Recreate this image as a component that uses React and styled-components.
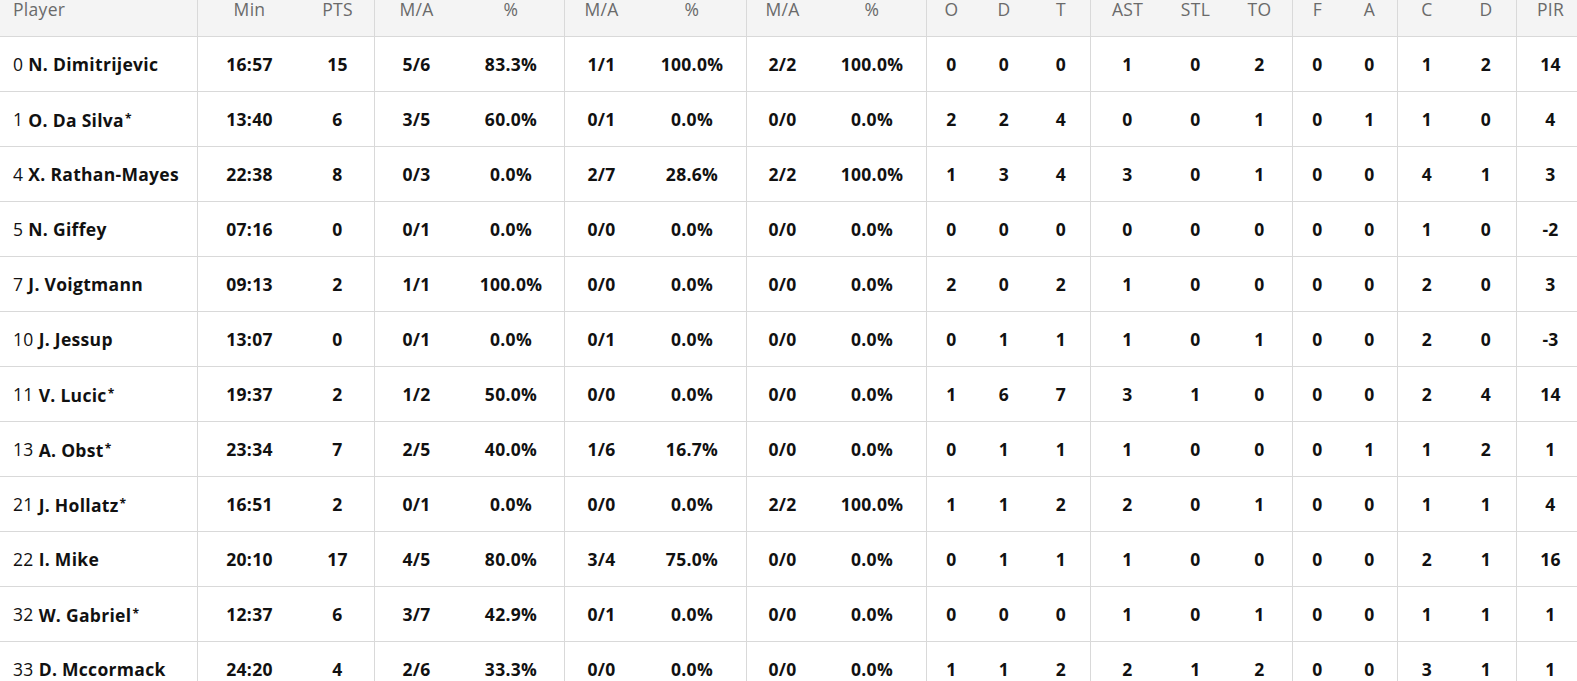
import React from "react";
import styled, { createGlobalStyle } from "styled-components";

const Global = createGlobalStyle`
  html, body { margin: 0; padding: 0; background: #fff; overflow: hidden; }
  body { font-family: "Open Sans", Lato, Arial, sans-serif; }
`;

const COLS = [197, 104, 73, 84, 106, 74, 108, 72, 108, 50, 56, 58, 74, 63, 65, 50, 55, 59, 60, 68];
const SEP = new Set([1, 3, 5, 7, 9, 12, 15, 17, 19]);
const template = COLS.map((w) => `${w}px`).join(" ");

const HEAD = ["Player", "Min", "PTS", "M/A", "%", "M/A", "%", "M/A", "%", "O", "D", "T", "AST", "STL", "TO", "F", "A", "C", "D", "PIR"];

const ROWS = [
  ["0", "N. Dimitrijevic", "16:57", "15", "5/6", "83.3%", "1/1", "100.0%", "2/2", "100.0%", "0", "0", "0", "1", "0", "2", "0", "0", "1", "2", "14"],
  ["1", "O. Da Silva*", "13:40", "6", "3/5", "60.0%", "0/1", "0.0%", "0/0", "0.0%", "2", "2", "4", "0", "0", "1", "0", "1", "1", "0", "4"],
  ["4", "X. Rathan-Mayes", "22:38", "8", "0/3", "0.0%", "2/7", "28.6%", "2/2", "100.0%", "1", "3", "4", "3", "0", "1", "0", "0", "4", "1", "3"],
  ["5", "N. Giffey", "07:16", "0", "0/1", "0.0%", "0/0", "0.0%", "0/0", "0.0%", "0", "0", "0", "0", "0", "0", "0", "0", "1", "0", "-2"],
  ["7", "J. Voigtmann", "09:13", "2", "1/1", "100.0%", "0/0", "0.0%", "0/0", "0.0%", "2", "0", "2", "1", "0", "0", "0", "0", "2", "0", "3"],
  ["10", "J. Jessup", "13:07", "0", "0/1", "0.0%", "0/1", "0.0%", "0/0", "0.0%", "0", "1", "1", "1", "0", "1", "0", "0", "2", "0", "-3"],
  ["11", "V. Lucic*", "19:37", "2", "1/2", "50.0%", "0/0", "0.0%", "0/0", "0.0%", "1", "6", "7", "3", "1", "0", "0", "0", "2", "4", "14"],
  ["13", "A. Obst*", "23:34", "7", "2/5", "40.0%", "1/6", "16.7%", "0/0", "0.0%", "0", "1", "1", "1", "0", "0", "0", "1", "1", "2", "1"],
  ["21", "J. Hollatz*", "16:51", "2", "0/1", "0.0%", "0/0", "0.0%", "2/2", "100.0%", "1", "1", "2", "2", "0", "1", "0", "0", "1", "1", "4"],
  ["22", "I. Mike", "20:10", "17", "4/5", "80.0%", "3/4", "75.0%", "0/0", "0.0%", "0", "1", "1", "1", "0", "0", "0", "0", "2", "1", "16"],
  ["32", "W. Gabriel*", "12:37", "6", "3/7", "42.9%", "0/1", "0.0%", "0/0", "0.0%", "0", "0", "0", "1", "0", "1", "0", "0", "1", "1", "1"],
  ["33", "D. Mccormack", "24:20", "4", "2/6", "33.3%", "0/0", "0.0%", "0/0", "0.0%", "1", "1", "2", "2", "1", "2", "0", "0", "3", "1", "1"],
];

const Table = styled.div`
  width: ${COLS.reduce((a, b) => a + b, 0)}px;
  color: #111;
`;

const Row = styled.div`
  display: grid;
  grid-template-columns: ${template};
  height: ${(p) => (p.$head ? 37 : 55)}px;
  box-sizing: border-box;
  border-bottom: 1px solid #d9d9d9;
  background: ${(p) => (p.$head ? "#f4f4f4" : "#fff")};
`;

const Cell = styled.div`
  box-sizing: border-box;
  display: flex;
  align-items: ${(p) => (p.$head ? "flex-start" : "center")};
  justify-content: ${(p) => (p.$left ? "flex-start" : "center")};
  padding-left: ${(p) => (p.$left ? "13px" : "0")};
  border-left: ${(p) => (p.$sep ? "1px solid #d9d9d9" : "none")};
  font-size: 17.5px;
  letter-spacing: 0.3px;
  line-height: 20px;
  white-space: nowrap;
`;

const HeadText = styled.span`
  color: #6a6a6a;
  font-weight: 400;
  margin-top: -1px;
`;

const Num = styled.span`
  font-weight: 400;
  margin-right: 5px;
`;

const Bold = styled.span`
  font-weight: 700;
`;

const Star = styled.span`
  font-size: 12px;
  vertical-align: 4px;
  margin-left: 1px;
`;

function Name({ text }) {
  if (text.endsWith("*")) {
    return (
      <Bold>
        {text.slice(0, -1)}
        <Star>*</Star>
      </Bold>
    );
  }
  return <Bold>{text}</Bold>;
}

export default function App() {
  return (
    <>
      <Global />
      <Table>
        <Row $head>
          {HEAD.map((h, i) => (
            <Cell key={i} $head $left={i === 0} $sep={SEP.has(i)}>
              <HeadText>{h}</HeadText>
            </Cell>
          ))}
        </Row>
        {ROWS.map((r, ri) => (
          <Row key={ri}>
            <Cell $left>
              <Num>{r[0]}</Num>
              <Name text={r[1]} />
            </Cell>
            {r.slice(2).map((v, i) => (
              <Cell key={i} $sep={SEP.has(i + 1)}>
                <Bold>{v}</Bold>
              </Cell>
            ))}
          </Row>
        ))}
      </Table>
    </>
  );
}
